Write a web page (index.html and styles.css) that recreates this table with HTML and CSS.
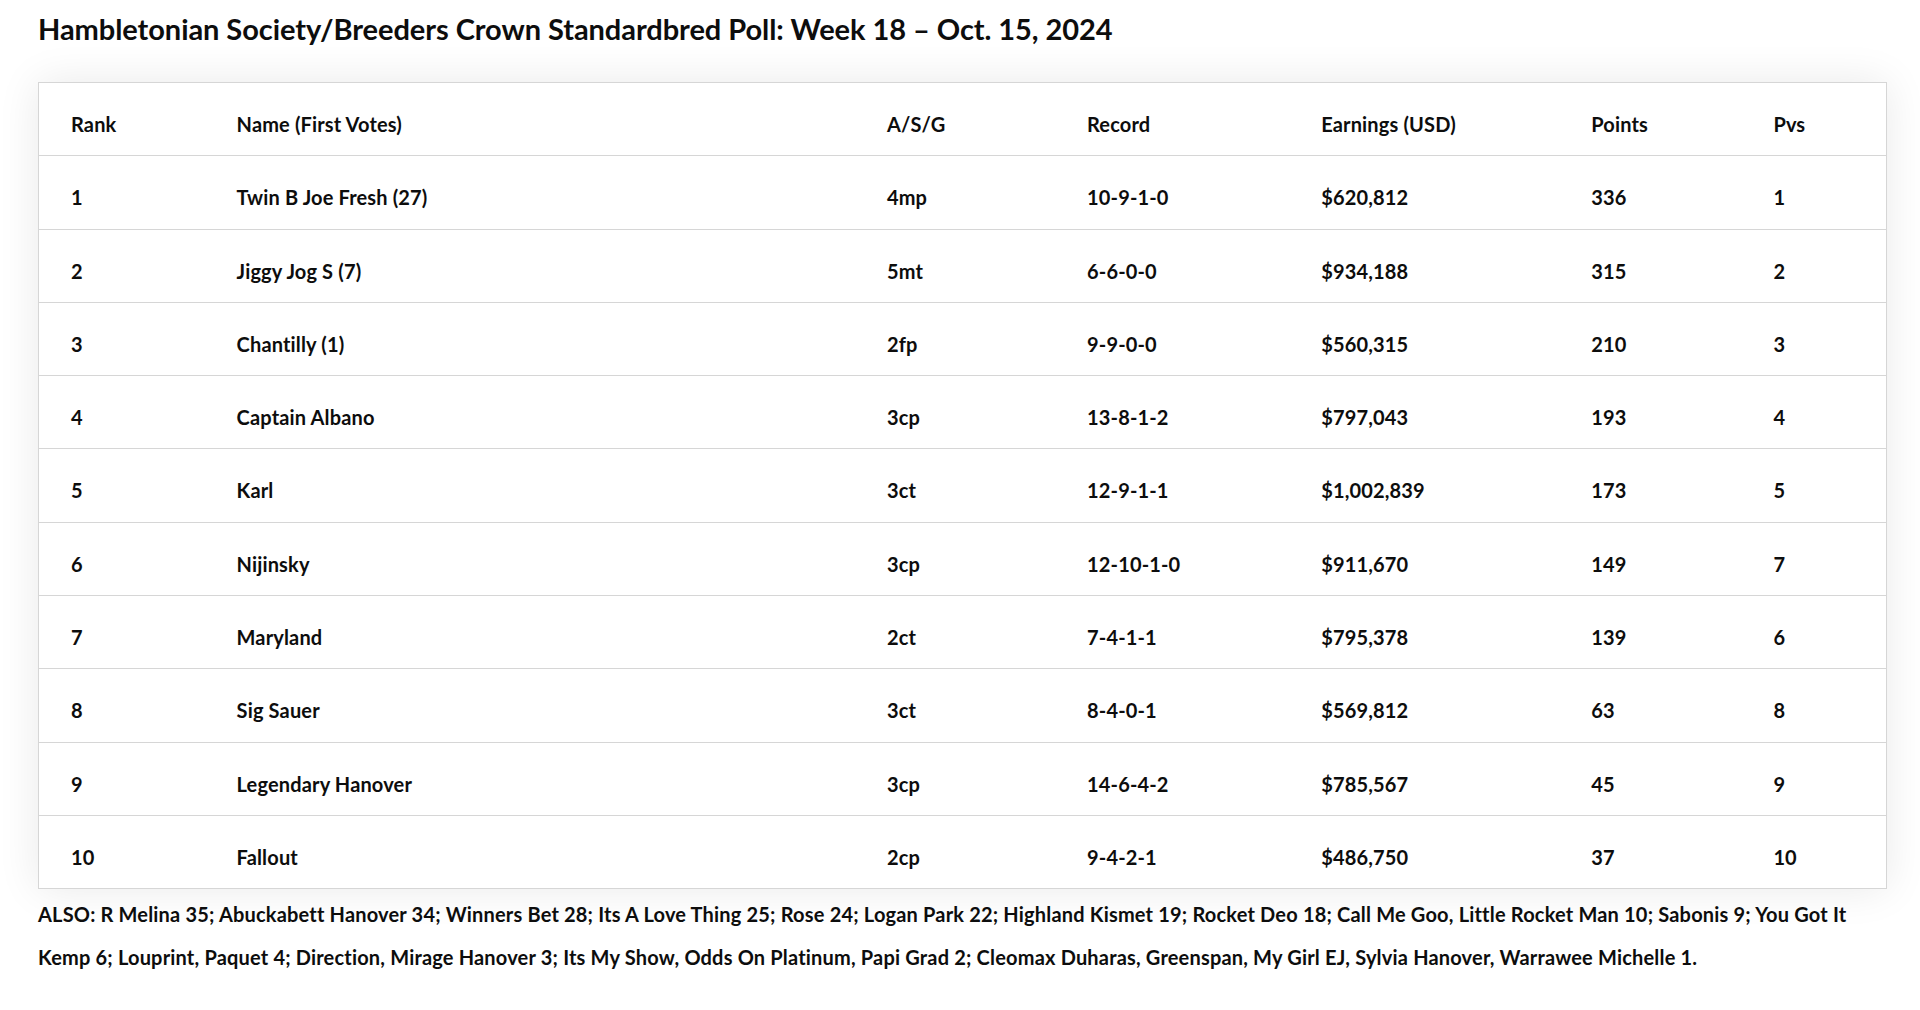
FILE: index.html
```html
<!DOCTYPE html>
<html lang="en">
<head>
<meta charset="utf-8">
<title>Hambletonian Society/Breeders Crown Standardbred Poll</title>
<link rel="stylesheet" href="styles.css">
</head>
<body>
<main class="page">
  <h1 class="title">Hambletonian Society/Breeders Crown Standardbred Poll: Week 18 – Oct. 15, 2024</h1>
  <table class="poll">
    <colgroup>
      <col class="c-rank">
      <col class="c-name">
      <col class="c-asg">
      <col class="c-record">
      <col class="c-earn">
      <col class="c-points">
      <col class="c-pvs">
    </colgroup>
    <thead>
      <tr><th>Rank</th><th>Name (First Votes)</th><th>A/S/G</th><th>Record</th><th>Earnings (USD)</th><th>Points</th><th>Pvs</th></tr>
    </thead>
    <tbody>
      <tr><td>1</td><td>Twin B Joe Fresh (27)</td><td>4mp</td><td>10-9-1-0</td><td>$620,812</td><td>336</td><td>1</td></tr>
      <tr><td>2</td><td>Jiggy Jog S (7)</td><td>5mt</td><td>6-6-0-0</td><td>$934,188</td><td>315</td><td>2</td></tr>
      <tr><td>3</td><td>Chantilly (1)</td><td>2fp</td><td>9-9-0-0</td><td>$560,315</td><td>210</td><td>3</td></tr>
      <tr><td>4</td><td>Captain Albano</td><td>3cp</td><td>13-8-1-2</td><td>$797,043</td><td>193</td><td>4</td></tr>
      <tr><td>5</td><td>Karl</td><td>3ct</td><td>12-9-1-1</td><td>$1,002,839</td><td>173</td><td>5</td></tr>
      <tr><td>6</td><td>Nijinsky</td><td>3cp</td><td>12-10-1-0</td><td>$911,670</td><td>149</td><td>7</td></tr>
      <tr><td>7</td><td>Maryland</td><td>2ct</td><td>7-4-1-1</td><td>$795,378</td><td>139</td><td>6</td></tr>
      <tr><td>8</td><td>Sig Sauer</td><td>3ct</td><td>8-4-0-1</td><td>$569,812</td><td>63</td><td>8</td></tr>
      <tr><td>9</td><td>Legendary Hanover</td><td>3cp</td><td>14-6-4-2</td><td>$785,567</td><td>45</td><td>9</td></tr>
      <tr><td>10</td><td>Fallout</td><td>2cp</td><td>9-4-2-1</td><td>$486,750</td><td>37</td><td>10</td></tr>
    </tbody>
  </table>
  <p class="also">ALSO: R Melina 35; Abuckabett Hanover 34; Winners Bet 28; Its A Love Thing 25; Rose 24; Logan Park 22; Highland Kismet 19; Rocket Deo 18; Call Me Goo, Little Rocket Man 10; Sabonis 9; You Got It Kemp 6; Louprint, Paquet 4; Direction, Mirage Hanover 3; Its My Show, Odds On Platinum, Papi Grad 2; Cleomax Duharas, Greenspan, My Girl EJ, Sylvia Hanover, Warrawee Michelle 1.</p>
</main>
</body>
</html>
```

FILE: styles.css
```css
html, body {
  margin: 0;
  padding: 0;
  background: #ffffff;
}

body {
  font-family: Lato, "Open Sans", "Liberation Sans", sans-serif;
  font-weight: 700;
  color: #0d0d0d;
}

.page {
  padding: 11px 33px 0 38px;
}

.title {
  margin: 0 0 35px 0;
  font-size: 29px;
  font-weight: 700;
  line-height: 36px;
  letter-spacing: -0.06px;
}

.poll {
  width: 1849px;
  border-collapse: collapse;
  table-layout: fixed;
  border: 1px solid #d6d6d6;
  box-shadow: 0 0 40px rgba(0, 0, 0, 0.09);
  background: #ffffff;
  font-size: 20px;
  letter-spacing: 0.15px;
}

.c-rank { width: 166px; }
.c-name { width: 650px; }
.c-asg { width: 200px; }
.c-record { width: 234px; }
.c-earn { width: 270px; }
.c-points { width: 182px; }
.c-pvs { width: 145px; }

.poll th,
.poll td {
  text-align: left;
  font-weight: 700;
  padding: 29px 32px 19.3px 32px;
  line-height: 24px;
  border-bottom: 1px solid #d6d6d6;
  white-space: nowrap;
}

.also {
  width: 1849px;
  margin: 4px 0 0 0;
  font-size: 20px;
  line-height: 43px;
  letter-spacing: 0.18px;
}
```
